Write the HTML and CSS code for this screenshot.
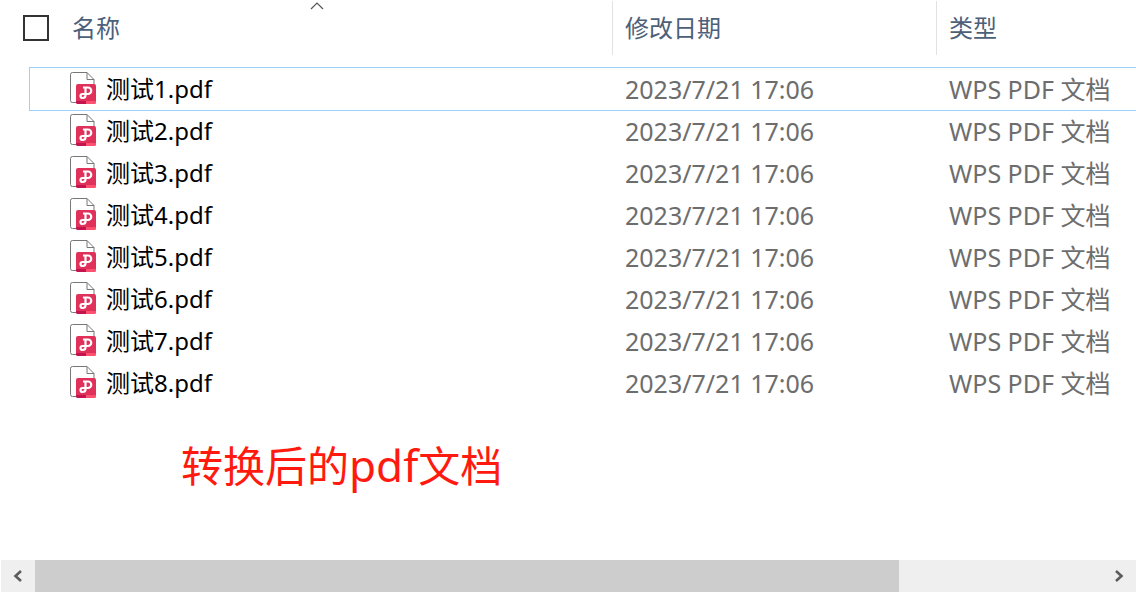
FILE: index.html
```
<!DOCTYPE html>
<html lang="zh-CN">
<head>
<meta charset="utf-8">
<title>文件列表</title>
<link rel="stylesheet" href="styles.css">
</head>
<body>
<svg class="defs" aria-hidden="true">
  <symbol id="pdf" viewBox="0 0 26 32">
    <path d="M2.500.5H17L24 7.500V30.500H2.500Q.5 30.500.5 28.500V2.500Q.5.500 2.500.500Z" fill="#fff" stroke="#777"/>
    <path d="M17 .5V7.500H24" fill="none" stroke="#777"/>
    <rect x="6" y="12" width="20" height="20" rx="2" fill="#e0315b"/>
    <path d="M6 29H16V32H8Q6 32 6 30Z" fill="#c31450"/>
    <path d="M16 29H26V30Q26 32 24 32H16Z" fill="#ff5070"/>
    <path d="M13 15.500H18A3.200 3.200 0 0 1 18 22H12.500A2 2 0 0 0 12.500 26Q15.500 26 15.500 23.500V16" fill="none" stroke="#fff" stroke-width="2.200"/>
  </symbol>
</svg>
<main class="explorer">
  <table class="files">
    <colgroup><col><col class="col-date"><col class="col-type"></colgroup>
    <thead>
      <tr>
        <th scope="col">
          <div class="name-head">
            <input type="checkbox" class="check" id="all" aria-label="全选">
            <label for="all">名称</label>
          </div>
          <svg class="sort" width="14" height="9" viewBox="0 0 14 9" aria-hidden="true"><path d="M1 8L7 2L13 8" fill="none" stroke="#555" stroke-width="1.200"/></svg>
        </th>
        <th scope="col">修改日期</th>
        <th scope="col">类型</th>
      </tr>
    </thead>
    <tbody>
      <tr class="focused"><td><div class="file"><svg class="icon"><use href="#pdf"/></svg>测试1.pdf</div></td><td>2023/7/21 17:06</td><td>WPS PDF 文档</td></tr>
      <tr><td><div class="file"><svg class="icon"><use href="#pdf"/></svg>测试2.pdf</div></td><td>2023/7/21 17:06</td><td>WPS PDF 文档</td></tr>
      <tr><td><div class="file"><svg class="icon"><use href="#pdf"/></svg>测试3.pdf</div></td><td>2023/7/21 17:06</td><td>WPS PDF 文档</td></tr>
      <tr><td><div class="file"><svg class="icon"><use href="#pdf"/></svg>测试4.pdf</div></td><td>2023/7/21 17:06</td><td>WPS PDF 文档</td></tr>
      <tr><td><div class="file"><svg class="icon"><use href="#pdf"/></svg>测试5.pdf</div></td><td>2023/7/21 17:06</td><td>WPS PDF 文档</td></tr>
      <tr><td><div class="file"><svg class="icon"><use href="#pdf"/></svg>测试6.pdf</div></td><td>2023/7/21 17:06</td><td>WPS PDF 文档</td></tr>
      <tr><td><div class="file"><svg class="icon"><use href="#pdf"/></svg>测试7.pdf</div></td><td>2023/7/21 17:06</td><td>WPS PDF 文档</td></tr>
      <tr><td><div class="file"><svg class="icon"><use href="#pdf"/></svg>测试8.pdf</div></td><td>2023/7/21 17:06</td><td>WPS PDF 文档</td></tr>
    </tbody>
  </table>
  <p class="note">转换后的<span class="latin">pdf</span>文档</p>
  <div class="scrollbar">
    <button type="button" class="arrow" aria-label="向左滚动"><svg width="10" height="12" viewBox="0 0 10 12"><path d="M8 1L2.500 6L8 11" fill="none" stroke="#5c5c5c" stroke-width="2.600"/></svg></button>
    <div class="track"><div class="thumb"></div></div>
    <button type="button" class="arrow" aria-label="向右滚动"><svg width="10" height="12" viewBox="0 0 10 12"><path d="M2 1L7.500 6L2 11" fill="none" stroke="#5c5c5c" stroke-width="2.600"/></svg></button>
  </div>
</main>
</body>
</html>
```
FILE: styles.css
```
* {
  box-sizing: border-box;
}

body {
  margin: 0;
  background: #fff;
  font-family: "Noto Sans", "Noto Sans CJK SC", sans-serif;
  font-size: 24px;
  line-height: 32px;
  color: #6d6d6d;
}

.defs {
  position: absolute;
  width: 0;
  height: 0;
}

.explorer {
  display: flex;
  flex-direction: column;
  min-height: 100vh;
  padding-top: 1px;
  overflow: hidden;
}

.files {
  margin-left: 30px;
  table-layout: fixed;
  border-spacing: 0;
  white-space: nowrap;
}

.col-date {
  width: 324px;
}

.col-type {
  width: 200px;
}

th {
  position: relative;
  height: 54px;
  padding: 0 12px;
  text-align: left;
  font-weight: 400;
  color: #4c607a;
}

th + th {
  border-left: 1px solid #e2e2e2;
}

th:first-child {
  padding: 0;
}

.name-head {
  display: flex;
  align-items: center;
  gap: 23px;
  margin-left: -7px;
}

.check {
  appearance: none;
  width: 26px;
  height: 26px;
  margin: 0;
  border: 2px solid #333;
  background: #fff;
}

.sort {
  position: absolute;
  top: 0;
  left: calc(50% - 11px);
}

tbody::before {
  content: "";
  display: block;
  height: 13px;
}

td {
  height: 42px;
  padding: 0 13px;
  font-size: 25px;
}

td:first-child {
  padding: 0 0 0 40px;
  font-size: 24px;
  color: #000;
}

.focused {
  outline: 1px solid #99d1ff;
}

.file {
  display: flex;
  align-items: center;
  gap: 10px;
}

.icon {
  width: 26px;
  height: 32px;
  margin-bottom: 2px;
}

.note {
  margin: 31px 0 0 181px;
  font-size: 42px;
  line-height: 60px;
  color: #ff1a10;
}

.latin {
  font-size: 44px;
}

.scrollbar {
  display: flex;
  height: 32px;
  margin-top: auto;
  margin-left: 1px;
  background: #efefef;
}

.arrow {
  display: flex;
  align-items: center;
  justify-content: center;
  width: 34px;
  padding: 0;
  border: 0;
  background: none;
}

.track {
  flex: 1;
}

.thumb {
  width: 81%;
  height: 100%;
  background: #cdcdcd;
}
```
